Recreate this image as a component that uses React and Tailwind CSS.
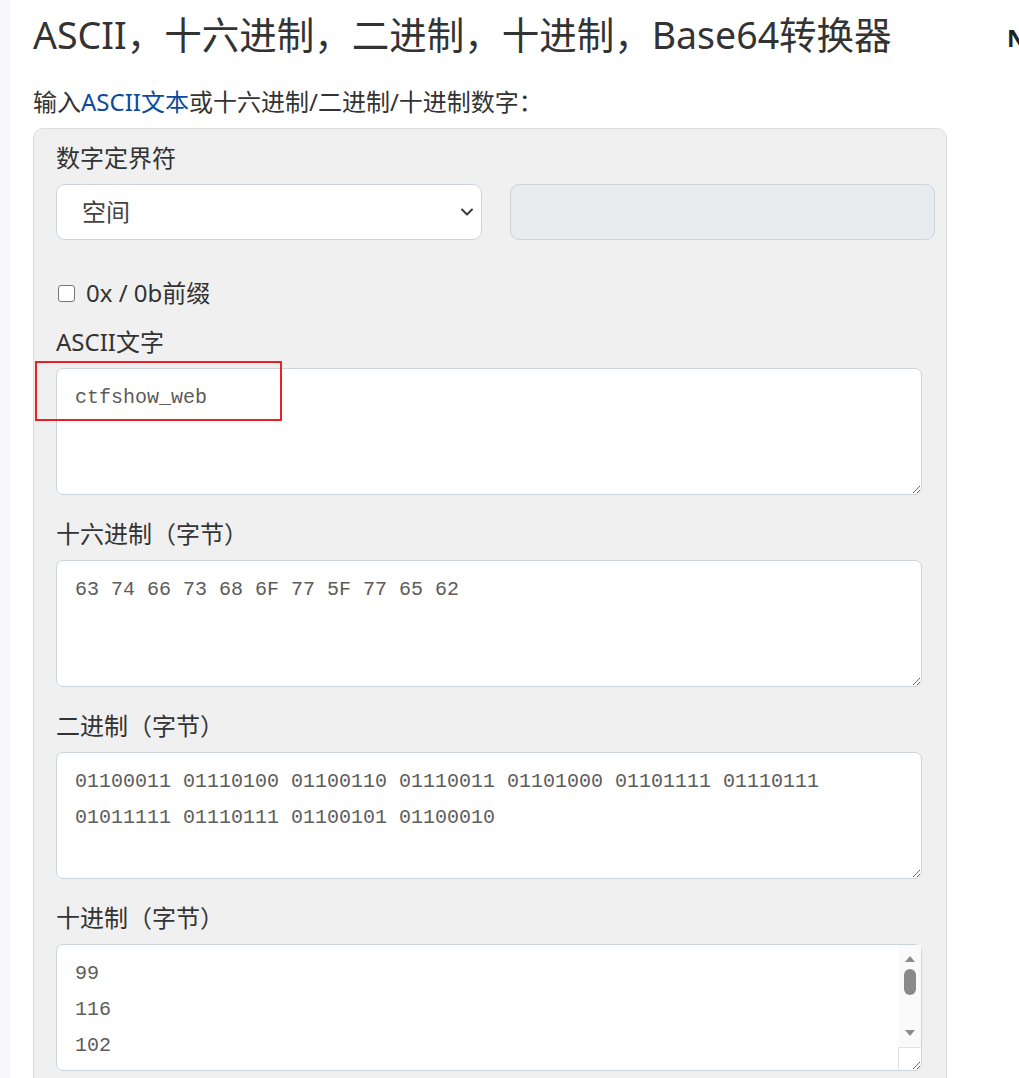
import { useState } from 'react';

const sans = "font-['Noto_Sans','Noto_Sans_CJK_SC',sans-serif]";
const mono = "font-['Liberation_Mono','DejaVu_Sans_Mono',monospace]";

const decimals = ['99', '116', '102', '115', '104', '111', '119', '95', '119', '101', '98'];

function Field({ label, value, className = '', children }) {
  return (
    <div className={className}>
      <p className="text-[24px] leading-[36px] text-[#333] mb-[8px]">{label}</p>
      <div className="relative w-[866px]">
        <textarea
          readOnly
          value={value}
          className={`${mono} block w-[866px] h-[127px] rounded-[7px] border border-[#ced4da] bg-white pl-[18px] pr-[40px] pt-[11px] text-[20px] leading-[36px] text-[#5c5c5c] outline-none overflow-hidden`}
        />
        {children}
      </div>
    </div>
  );
}

function FakeScrollbar() {
  return (
    <>
      <div className="absolute right-[1px] top-[1px] bottom-[24px] w-[22px] bg-[#fafafa] flex flex-col items-center">
        <svg width="12" height="8" viewBox="0 0 12 8" className="mt-[10px]">
          <path d="M6 1 L11 7 L1 7 Z" fill="#8a8a8a" />
        </svg>
        <div className="mt-[6px] w-[12px] h-[26px] rounded-full bg-[#8a8a8a]" />
        <div className="flex-1" />
        <svg width="12" height="8" viewBox="0 0 12 8" className="mb-[10px]">
          <path d="M1 1 L11 1 L6 7 Z" fill="#8a8a8a" />
        </svg>
      </div>
      <div className="absolute right-[1px] bottom-[1px] w-[23px] h-[23px] border-l border-t border-[#e2e2e2] pointer-events-none" />
    </>
  );
}

export default function App() {
  const [delimiter, setDelimiter] = useState('space');
  const [prefix, setPrefix] = useState(false);

  return (
    <div className={`${sans} flex w-[1019px] min-h-[1078px] overflow-hidden bg-white`}>
      <div className="w-[10px] shrink-0 bg-[#f6f8fc]" />

      <main className="ml-[23px] w-[914px] shrink-0 pt-[13px]">
        <h1 className="text-[37.5px] leading-[44px] text-[#333] font-normal whitespace-nowrap">
          ASCII，十六进制，二进制，十进制，Base64转换器
        </h1>
        <p className="mt-[27px] text-[24px] leading-[36px] text-[#333]">
          输入<a href="#" className="text-[#0d4a9e]">ASCII文本</a>或十六进制/二进制/十进制数字：
        </p>

        <div className="mt-[8px] rounded-[10px] border border-[#dcdcdc] bg-[#f0f0f0] pl-[22px] pt-[11px] pb-[24px]">
          <p className="text-[24px] leading-[36px] text-[#333] mb-[8px]">数字定界符</p>
          <div className="flex gap-[28px]">
            <div className="relative w-[426px] h-[56px]">
              <select
                value={delimiter}
                onChange={(e) => setDelimiter(e.target.value)}
                className="appearance-none w-full h-full rounded-[9px] border border-[#ced4da] bg-white pl-[25px] text-[24px] text-[#444] outline-none"
              >
                <option value="space">空间</option>
                <option value="comma">逗号</option>
                <option value="none">没有</option>
                <option value="user">用户定义</option>
              </select>
              <svg
                width="14"
                height="10"
                viewBox="0 0 14 10"
                className="absolute right-[8px] top-[23px] pointer-events-none"
              >
                <path d="M2 2.5 L7 7.5 L12 2.5" fill="none" stroke="#343a40" strokeWidth="2" strokeLinecap="round" strokeLinejoin="round" />
              </svg>
            </div>
            <div className="w-[425px] h-[56px] rounded-[9px] border border-[#ced4da] bg-[#e9ecef]" />
          </div>

          <label className="mt-[35px] flex items-center h-[36px] text-[24px] text-[#333]">
            <input
              type="checkbox"
              checked={prefix}
              onChange={(e) => setPrefix(e.target.checked)}
              className="appearance-none w-[17px] h-[17px] ml-[2px] rounded-[3px] border-[1.5px] border-[#767676] bg-white"
            />
            <span className="ml-[11px]">0x / 0b前缀</span>
          </label>

          <Field label="ASCII文字" value="ctfshow_web" className="mt-[13px]">
            <div className="absolute left-[-21px] top-[-7px] w-[247px] h-[60px] border-2 border-[#e8202a] pointer-events-none" />
          </Field>

          <Field label="十六进制（字节）" value="63 74 66 73 68 6F 77 5F 77 65 62" className="mt-[21px]" />

          <Field
            label="二进制（字节）"
            value="01100011 01110100 01100110 01110011 01101000 01101111 01110111 01011111 01110111 01100101 01100010"
            className="mt-[21px]"
          />

          <Field label="十进制（字节）" value={decimals.join('\n')} className="mt-[21px]">
            <FakeScrollbar />
          </Field>
        </div>
      </main>

      <aside className="ml-[60px] pt-[20px] shrink-0">
        <p className="text-[24px] leading-[36px] font-bold text-[#222]">N</p>
      </aside>
    </div>
  );
}
